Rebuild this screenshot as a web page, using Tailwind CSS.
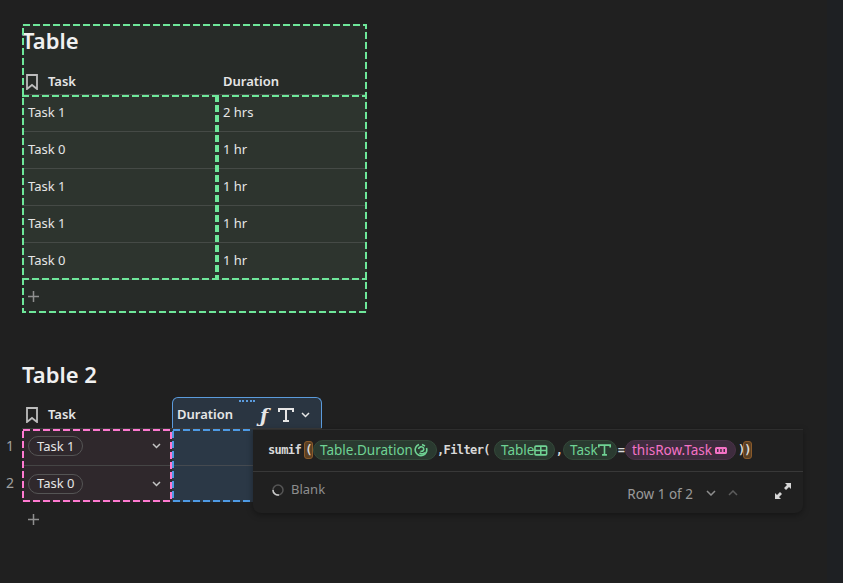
<!DOCTYPE html>
<html lang="en">
<head>
  <meta charset="UTF-8" />
  <meta name="viewport" content="width=device-width, initial-scale=1.0" />
  <title>Tables</title>
  <script src="https://cdn.jsdelivr.net/npm/@tailwindcss/browser@4"></script>
</head>
<body class="flex h-[583px] w-[843px] overflow-hidden bg-[#202020] font-['Noto_Sans',sans-serif] text-[13px] text-[#e6e6e6]">
  <main class="flex-1 pl-[22px] pt-[24px]">

    <!-- first table -->
    <section class="relative h-[289px] w-[345px] bg-[#272b28]">
      <h2 class="h-[38px] text-[22px] font-semibold leading-[33px] text-[#f0f0f0]">Table</h2>
      <div class="flex h-[33px] items-center border-b border-[#454a46] pt-[7px] font-semibold">
        <div class="flex w-[195px] items-center pl-[4px]">
          <svg class="h-[16px] w-[12px]" viewBox="0 0 12 16" fill="none" stroke="#bdbdbd" stroke-width="1.8"><path d="M1 1h10v14l-5-4-5 4z" /></svg>
          <span class="ml-[10px]">Task</span>
        </div>
        <span class="pl-[6px]">Duration</span>
      </div>
      <div class="relative bg-[#2d342e]">
        <div class="flex h-[37px] items-center border-b border-[#454a46]"><span class="w-[195px] pl-[6px]">Task 1</span><span class="pl-[6px]">2 hrs</span></div>
        <div class="flex h-[37px] items-center border-b border-[#454a46]"><span class="w-[195px] pl-[6px]">Task 0</span><span class="pl-[6px]">1 hr</span></div>
        <div class="flex h-[37px] items-center border-b border-[#454a46]"><span class="w-[195px] pl-[6px]">Task 1</span><span class="pl-[6px]">1 hr</span></div>
        <div class="flex h-[37px] items-center border-b border-[#454a46]"><span class="w-[195px] pl-[6px]">Task 1</span><span class="pl-[6px]">1 hr</span></div>
        <div class="flex h-[37px] items-center border-b border-[#454a46]"><span class="w-[195px] pl-[6px]">Task 0</span><span class="pl-[6px]">1 hr</span></div>
        <svg class="absolute left-0 top-0 h-[185px] w-[345px]" viewBox="0 0 345 185" fill="none" stroke="#6ee79a">
          <path d="M0 1h345M0 184h345" stroke-width="2" stroke-dasharray="7 3" />
          <path d="M195 0v185" stroke-width="4" stroke-dasharray="7 3" />
        </svg>
      </div>
      <div class="flex h-[33px] items-center pb-[1px] pl-[6px]">
        <svg class="h-[11px] w-[11px]" viewBox="0 0 11 11" stroke="#8f8f8f" stroke-width="1.5"><path d="M5.5 0v11M0 5.5h11" /></svg>
      </div>
      <svg class="absolute inset-0 h-[289px] w-[345px]" viewBox="0 0 345 289" fill="none" stroke="#6ee79a" stroke-width="2" stroke-dasharray="7 3"><rect x="1" y="1" width="343" height="287" /></svg>
    </section>

    <!-- second table with the formula editor -->
    <section class="relative mt-[45px] w-[300px]">
      <h2 class="h-[39px] text-[22px] font-semibold leading-[33px] text-[#f0f0f0]">Table 2</h2>
      <div class="flex h-[32px] border-b border-[#3a3a3a] font-semibold">
        <div class="flex w-[150px] items-center pl-[4px] pt-[4px]">
          <svg class="h-[16px] w-[12px]" viewBox="0 0 12 16" fill="none" stroke="#bdbdbd" stroke-width="1.8"><path d="M1 1h10v14l-5-4-5 4z" /></svg>
          <span class="ml-[10px]">Task</span>
        </div>
        <div class="relative flex w-[150px] items-center rounded-t-md border border-b-0 border-[#5b9bdc] bg-[#2a3541] pl-[4px] pt-[4px]">
          <span class="w-[83px]">Duration</span>
          <span class="w-[18px] font-['DejaVu_Serif',serif] text-[19px] font-bold italic leading-none">ƒ</span>
          <svg class="h-[14px] w-[16px]" viewBox="0 0 16 14" fill="none" stroke="#e6e6e6" stroke-width="2"><path d="M1 4V1h14v3M8 1v12M5 13h6" /></svg>
          <svg class="ml-[7px] h-[6px] w-[9px]" viewBox="0 0 9 6" fill="none" stroke="#e6e6e6" stroke-width="1.5"><path d="M1 1l3.5 3.5L8 1" /></svg>
          <div class="absolute left-[66px] top-[2px] w-[16px] border-t-2 border-dotted border-[#5b9bdc]"></div>
        </div>
      </div>
      <div class="flex">
        <div class="relative w-[150px] bg-[#2f282c]">
          <div class="flex h-[37px] items-center justify-between border-b border-[#454545] pb-[2px] pl-[6px] pr-[11px]">
            <span class="flex h-[20px] items-center rounded-full border border-[#555] px-[8px] leading-none">Task 1</span>
            <svg class="h-[6px] w-[9px]" viewBox="0 0 9 6" fill="none" stroke="#c4c4c4" stroke-width="1.5"><path d="M1 1l3.5 3.5L8 1" /></svg>
          </div>
          <div class="flex h-[36px] items-center justify-between pb-[1px] pl-[6px] pr-[11px]">
            <span class="flex h-[20px] items-center rounded-full border border-[#555] px-[8px] leading-none">Task 0</span>
            <svg class="h-[6px] w-[9px]" viewBox="0 0 9 6" fill="none" stroke="#c4c4c4" stroke-width="1.5"><path d="M1 1l3.5 3.5L8 1" /></svg>
          </div>
          <svg class="absolute inset-0 h-[73px] w-[150px]" viewBox="0 0 150 73" fill="none" stroke="#ff7ad1" stroke-width="2" stroke-dasharray="7 3"><rect x="1" y="1" width="148" height="71" /></svg>
          <span class="absolute -left-[16px] top-[7px] text-[14px] leading-[20px] text-[#a0a0a0]">1</span>
          <span class="absolute -left-[16px] top-[44px] text-[14px] leading-[20px] text-[#a0a0a0]">2</span>
        </div>
        <div class="relative w-[150px] bg-[#2b3846]">
          <div class="h-[37px] border-b border-[#454a50]"></div>
          <div class="h-[36px]"></div>
          <svg class="absolute inset-0 h-[73px] w-[150px]" viewBox="0 0 150 73" fill="none" stroke="#4e9be6" stroke-width="2" stroke-dasharray="7 3"><rect x="1" y="1" width="148" height="71" /></svg>
        </div>
      </div>
      <div class="flex h-[34px] items-center pl-[6px]">
        <svg class="h-[11px] w-[11px]" viewBox="0 0 11 11" stroke="#8f8f8f" stroke-width="1.5"><path d="M5.5 0v11M0 5.5h11" /></svg>
      </div>

      <div class="absolute left-[231px] top-[71px] w-[550px] rounded-b-lg border-t border-[#2e2e2e] bg-[#202020] shadow-[0_2px_6px_rgba(0,0,0,0.35)]">
        <div class="flex h-[42px] items-center border-b border-[#383838] pb-[1px] pl-[15px] font-['DejaVu_Sans_Mono',monospace] text-[12px] font-bold tracking-[-0.6px] text-[#d8d8d8]">
          <span class="w-[33px]">sumif</span>
          <span class="ml-[3px] flex h-[18px] w-[9px] items-center justify-center rounded-[3px] border border-[#8a5a2a] bg-[#5b4023]">(</span>
          <span class="flex h-[20px] w-[124px] items-center justify-between rounded-full border border-[#34493a] bg-[#2a3a30] pl-[6px] pr-[8px] font-['Noto_Sans',sans-serif] text-[13.5px] font-normal tracking-normal text-[#6fd394]">
            Table.Duration
            <svg class="h-[14px] w-[14px]" viewBox="0 0 14 14" fill="none" stroke="#6fd394" stroke-width="1.6"><path d="M5 1.400a5.800 5.800 0 1 0 7.500 3.600" /><path d="M4.500 6a2.800 2.800 0 0 1 5-1c1 2-1 4-3 3M11 9.500c-1.500 1.500-4 1.500-5.500 .5M8 1.500l3 1.500" /></svg>
          </span>
          <span class="w-[57px]">,Filter(</span>
          <span class="flex h-[20px] w-[61px] items-center justify-between rounded-full border border-[#34493a] bg-[#2a3a30] pl-[6px] pr-[6px] font-['Noto_Sans',sans-serif] text-[13.5px] font-normal tracking-normal text-[#6fd394]">
            Table
            <svg class="h-[11px] w-[14px]" viewBox="0 0 14 11" fill="none" stroke="#6fd394" stroke-width="1.600"><rect x="1" y="1" width="12" height="9" rx="1" /><path d="M1 5.500h12M7 1v9" /></svg>
          </span>
          <span class="w-[8px] text-center">,</span>
          <span class="flex h-[20px] w-[54px] items-center justify-between rounded-full border border-[#34493a] bg-[#2a3a30] pl-[6px] pr-[5px] font-['Noto_Sans',sans-serif] text-[13.5px] font-normal tracking-normal text-[#6fd394]">
            Task
            <svg class="h-[12px] w-[13px]" viewBox="0 0 16 14" fill="none" stroke="#6fd394" stroke-width="2"><path d="M1 4V1h14v3M8 1v12M5 13h6" /></svg>
          </span>
          <span class="w-[8px] text-center">=</span>
          <span class="flex h-[20px] w-[111px] items-center justify-between rounded-full border border-[#4a3248] bg-[#3e2c3e] pl-[6px] pr-[8px] font-['Noto_Sans',sans-serif] text-[13.5px] font-normal tracking-normal text-[#f472c6]">
            thisRow.Task
            <svg class="h-[7px] w-[12px]" viewBox="0 0 12 7" fill="#f472c6"><path d="M1.500 0h9a1.500 1.500 0 0 1 1.500 1.500v4a1.500 1.500 0 0 1-1.500 1.500h-9a1.500 1.500 0 0 1-1.500-1.500v-4a1.500 1.500 0 0 1 1.500-1.500zM2 2v3h1.500v-3zM5.200 2v3h1.500v-3zM8.500 2v3h1.500v-3z" fill-rule="evenodd" /></svg>
          </span>
          <span class="ml-[2px] w-[5px]">)</span>
          <span class="flex h-[18px] w-[9px] items-center justify-center rounded-[3px] border border-[#8a5a2a] bg-[#5b4023]">)</span>
        </div>
        <div class="flex h-[41px] items-center pl-[19px] pr-[12px] text-[#8e8e8e]">
          <div class="mb-[6px] flex items-center">
            <svg class="h-[12px] w-[12px]" viewBox="0 0 12 12" fill="none" stroke-width="1.500"><circle cx="6" cy="6" r="5" stroke="#555" /><path d="M1 6a5 5 0 0 0 6 5" stroke="#c8c8c8" /></svg>
            <span class="ml-[7px]">Blank</span>
          </div>
          <span class="ml-auto mt-[3px] text-[13.5px] text-[#9a9a9a]">Row 1 of 2</span>
          <svg class="ml-[13px] h-[6px] w-[10px]" viewBox="0 0 10 6" fill="none" stroke="#8e8e8e" stroke-width="1.500"><path d="M1 1l4 4 4-4" /></svg>
          <svg class="ml-[12px] h-[6px] w-[10px]" viewBox="0 0 10 6" fill="none" stroke="#5c5c5c" stroke-width="1.500"><path d="M1 5l4-4 4 4" /></svg>
          <svg class="mb-[3px] ml-[37px] h-[16px] w-[16px]" viewBox="0 0 16 16" fill="#d6d6d6"><path d="M10 0h6v6l-2-2-3 3-2-2 3-3zM6 16H0v-6l2 2 3-3 2 2-3 3z" /></svg>
        </div>
      </div>
    </section>
  </main>
  <aside class="w-[16px] bg-[#1e2023]"></aside>
</body>
</html>
